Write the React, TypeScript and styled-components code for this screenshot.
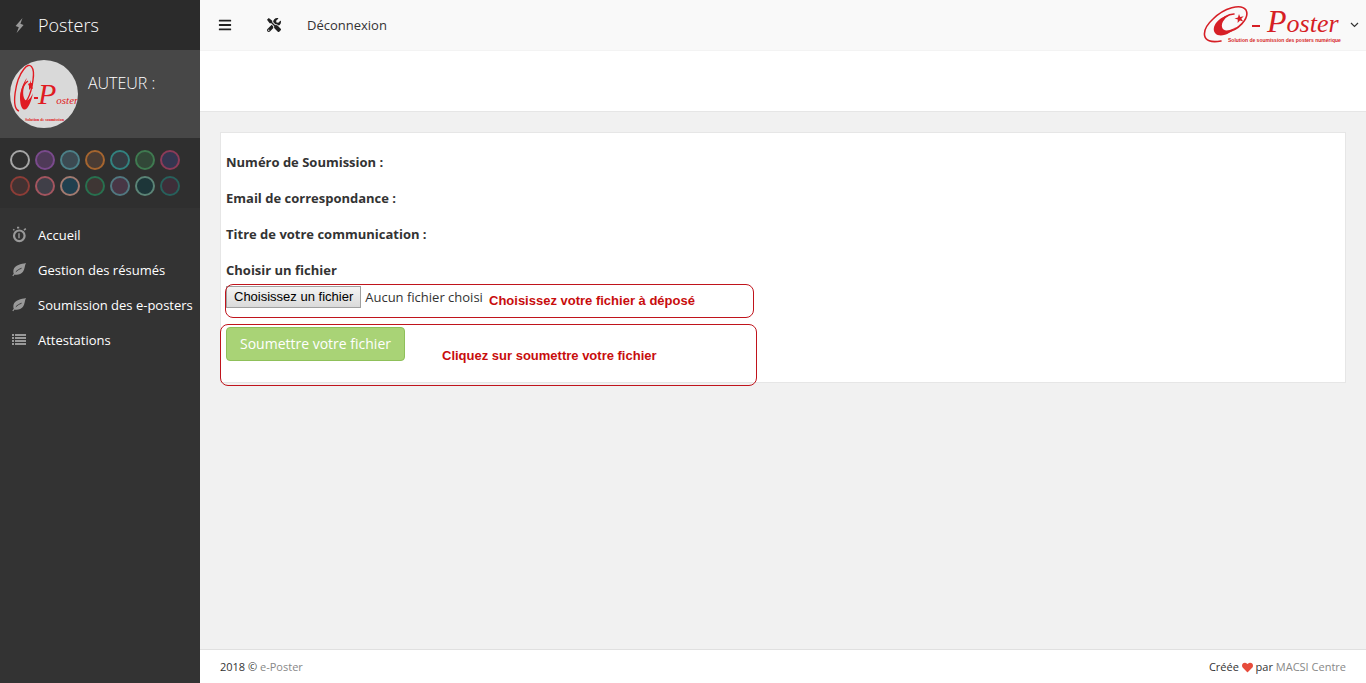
import React, { useRef, useState } from 'react';
import styled, { createGlobalStyle } from 'styled-components';
import { FaBars, FaHeart, FaTools } from 'react-icons/fa';

const GlobalStyle = createGlobalStyle`
  *, *::before, *::after { box-sizing: border-box; }
  body {
    margin: 0;
    background: #333;
    color: #333;
    font-family: "Open Sans", "Noto Sans", sans-serif;
    font-size: 13px;
    line-height: 18px;
  }
  a { color: inherit; text-decoration: none; }
  button { font: inherit; cursor: pointer; }
`;

const Page = styled.div`
  display: flex;
  min-height: 100vh;
`;

const Sidebar = styled.aside`
  flex: 0 0 200px;
  background: #333;
  color: #fff;
`;

const Brand = styled.a`
  display: flex;
  align-items: center;
  gap: 11px;
  height: 50px;
  padding: 0 12px;
  background: #2b2b2b;
  font-size: 18px;
  font-weight: 300;
  svg { color: #999; }
`;

const Profile = styled.section`
  display: flex;
  gap: 10px;
  height: 88px;
  padding: 10px;
  background: #474747;
`;

const Avatar = styled.svg`
  width: 68px;
  height: 68px;
  border-radius: 50%;
  background: #d9d9d9;
`;

const ProfileName = styled.h2`
  margin: 12px 0 0;
  font-size: 16px;
  line-height: 22px;
  font-weight: 300;
`;

const Swatches = styled.div`
  display: grid;
  grid-template-columns: repeat(7, 20px);
  gap: 6px 5px;
  height: 70px;
  padding: 12px 10px;
  background: #2f2f2f;
  align-content: start;
`;

const Swatch = styled.button<{ $ring: string; $fill: string }>`
  width: 20px;
  height: 20px;
  padding: 0;
  border: 2px solid ${(p) => p.$ring};
  border-radius: 50%;
  background: ${(p) => p.$fill};
`;

const Menu = styled.nav`
  display: flex;
  flex-direction: column;
  padding-top: 9px;
`;

const MenuLink = styled.a`
  display: flex;
  align-items: center;
  gap: 11px;
  height: 35px;
  padding-left: 12px;
  white-space: nowrap;
  svg { color: #999; flex: none; }
`;

const Main = styled.div`
  display: flex;
  flex: 1;
  flex-direction: column;
  min-width: 0;
  background: #f1f1f1;
`;

const TopBar = styled.header`
  display: flex;
  align-items: center;
  height: 51px;
  padding: 0 7px 0 18px;
  background: #f9f9f9;
  border-bottom: 1px solid #f3f3f3;
`;

const IconButton = styled.button`
  display: flex;
  width: 14px;
  margin-right: 35px;
  padding: 0;
  border: 0;
  background: none;
  color: #222;
`;

const LogoutLink = styled.a`
  margin-left: -9px;
`;

const AccountButton = styled.button`
  display: flex;
  align-items: center;
  gap: 5px;
  margin-left: auto;
  padding: 0;
  border: 0;
  background: none;
  color: #333;
`;

const TitleBar = styled.div`
  height: 61px;
  background: #fff;
  border-bottom: 1px solid #e6e6e6;
`;

const Content = styled.main`
  flex: 1;
  padding: 20px;
`;

const Panel = styled.form`
  display: flex;
  flex-direction: column;
  align-items: flex-start;
  padding: 20px 5px 21px;
  background: #fff;
  border: 1px solid #e6e6e6;
`;

const Field = styled.p`
  margin: 0 0 18px;
  font-weight: 700;
`;

const FileLabel = styled.label`
  margin-bottom: 7px;
  font-weight: 700;
`;

const Step = styled.div`
  position: relative;
  display: flex;
  align-items: center;
  gap: 4px;
  & + & { margin-top: 19px; }
`;

const StepOutline = styled.div<{ $inset: string; $width: number; $height: number }>`
  position: absolute;
  inset: ${(p) => p.$inset};
  width: ${(p) => p.$width}px;
  height: ${(p) => p.$height}px;
  border: 1px solid #c0141c;
  border-radius: 8px;
  pointer-events: none;
`;

const StepNote = styled.strong<{ $left: number; $top: number }>`
  position: absolute;
  left: ${(p) => p.$left}px;
  top: ${(p) => p.$top}px;
  color: #c80d0d;
  font-family: "Liberation Sans", Arial, sans-serif;
  white-space: nowrap;
`;

const FileButton = styled.button`
  height: 22px;
  padding: 0 7px;
  border: 1px solid #a0a0a0;
  border-radius: 0;
  background: linear-gradient(#f4f4f4, #dadada);
  color: #000;
  font-family: "Liberation Sans", Arial, sans-serif;
  line-height: 20px;
`;

const SubmitButton = styled.button`
  height: 34px;
  padding: 0 13px;
  border: 1px solid #8fc05a;
  border-radius: 4px;
  background: #a9d376;
  color: #fff;
  font-size: 14px;
  line-height: 20px;
`;

const Footer = styled.footer`
  display: flex;
  justify-content: space-between;
  height: 34px;
  padding: 8px 20px;
  background: #fff;
  border-top: 1px solid #e0e0e0;
  font-size: 11px;
  a { color: #888; }
  svg { color: #e74c3c; vertical-align: -2px; }
`;

const swatches = [
  ['#a6a6a6', '#2f2f2f'], ['#7a4a8c', '#4f3a58'], ['#4c8088', '#3c4a52'], ['#a5652f', '#4a3c34'],
  ['#32827f', '#353b41'], ['#3f7a50', '#324838'], ['#8c3b58', '#343650'],
  ['#8d3d37', '#423232'], ['#a3555f', '#403f48'], ['#a27a70', '#20404f'], ['#28714f', '#3e3634'],
  ['#517880', '#483645'], ['#5b8476', '#1d3639'], ['#27615c', '#3e2e39'],
];

const BoltIcon = () => (
  <svg width="15" height="16" viewBox="0 0 15 16" fill="currentColor" aria-hidden="true">
    <path d="M10.5 1L3.6 9l3.2 1.2L4.6 16 11.6 8 8.4 6.8z" />
  </svg>
);

const StopwatchIcon = () => (
  <svg width="15" height="17" viewBox="0 0 15 17" fill="none" stroke="currentColor" aria-hidden="true">
    <circle cx="7.3" cy="9.8" r="5.3" strokeWidth="2.2" />
    <path d="M7 7.2v5" strokeWidth="1.4" />
    <path d="M5 1.6h2.2M12 4.2l1.8-1.6M1.3 4.2l1-1" strokeWidth="1.6" />
  </svg>
);

const LeafIcon = () => (
  <svg width="15" height="15" viewBox="0 0 15 15" aria-hidden="true">
    <path d="M14 1C9 2 3 3 1.6 7.4C1 9.6 1.5 11.3 2.2 12.4C5 13.2 9 12.6 11 9.8C12.8 7.2 12.6 3.6 14 1Z" fill="currentColor" />
    <path d="M0.8 14C1.6 12.8 2.2 12 3 11" fill="none" stroke="currentColor" strokeWidth="1.2" />
    <path d="M3.8 9.8C5.4 8.2 7 7.2 9.6 6.2" fill="none" stroke="#333" strokeWidth="0.9" />
  </svg>
);

const ListIcon = () => (
  <svg width="15" height="13" viewBox="0 0 15 13" fill="currentColor" aria-hidden="true">
    {[1, 4, 7, 10].map((y) => (
      <path key={y} d={`M0 ${y}h2v2h-2zM3 ${y}h11v2h-11z`} />
    ))}
  </svg>
);

const Logo = () => (
  <svg width="142" height="40" viewBox="0 0 142 40" role="img" aria-label="e-Poster">
    <g fill="none" stroke="#d61f26" strokeLinecap="round">
      <path d="M18 36C-3 40-2 25 10 14C21 3 38-2 43 5C47 13 35 26 23 27C12 27 13 18 22 12C25 10 28 9 31 9" strokeWidth="1.6" />
    </g>
    <path d="M27 10C15 12 8 22 12 28C17 34 29 28 33 22C27 26 20 27 19 22C18 17 23 12 27 10Z" fill="#d61f26" />
    <path d="M36 9l1.2 3 3.5-.8-2.4 2.6 2 2.7-3.3-1-2.4 2.5.2-3.4-3.3-1.2 3.4-1z" fill="#d61f26" />
    <path d="M49 21h8" stroke="#d61f26" strokeWidth="2" />
    <text x="64" y="27" fill="#d61f26" fontFamily="Liberation Serif, serif" fontStyle="italic">
      <tspan fontSize="32">P</tspan>
      <tspan fontSize="26">oster</tspan>
    </text>
    <text x="25" y="37" fill="#d61f26" fontFamily="Liberation Sans, sans-serif" fontWeight="700" fontSize="5">
      Solution de soumission des posters numérique
    </text>
  </svg>
);

const AvatarLogo = () => (
  <Avatar viewBox="0 0 68 68" role="img" aria-label="e-Poster">
    <path
      d="M9 51C1 48 5 20 14 9C20 1 25 7 23 20C21 36 15 46 12 42C9 37 12 25 18 21"
      fill="none"
      stroke="#e01b22"
      strokeWidth="1.4"
    />
    <path d="M17 18C10 26 8 44 13 49C17 52 21 43 23 33C20 40 16 43 14 38C12 32 14 25 17 18Z" fill="#e01b22" />
    <path d="M20 20l1 3 2 0-1 3 1 3-2-1-2 2 0-4-1-2 2-1z" fill="#e01b22" />
    <path d="M24 38h4" stroke="#e01b22" strokeWidth="2" />
    <text x="28" y="44" fill="#e01b22" fontFamily="Liberation Serif, serif" fontStyle="italic">
      <tspan fontSize="30">P</tspan><tspan fontSize="11">oster</tspan>
    </text>
    <text x="15" y="61" fill="#e01b22" fontFamily="Liberation Serif, serif" fontWeight="700" fontSize="4">
      Solution de soumission
    </text>
  </Avatar>
);

export default function App() {
  const fileInput = useRef<HTMLInputElement>(null);
  const [fileName, setFileName] = useState('Aucun fichier choisi');

  return (
    <>
      <GlobalStyle />
      <Page>
        <Sidebar>
          <Brand href="#"><BoltIcon />Posters</Brand>
          <Profile>
            <AvatarLogo />
            <ProfileName>AUTEUR :</ProfileName>
          </Profile>
          <Swatches>
            {swatches.map(([ring, fill], i) => (
              <Swatch key={ring} type="button" $ring={ring} $fill={fill} aria-label={`Thème ${i + 1}`} />
            ))}
          </Swatches>
          <Menu>
            <MenuLink href="#"><StopwatchIcon />Accueil</MenuLink>
            <MenuLink href="#"><LeafIcon />Gestion des résumés</MenuLink>
            <MenuLink href="#"><LeafIcon />Soumission des e-posters</MenuLink>
            <MenuLink href="#"><ListIcon />Attestations</MenuLink>
          </Menu>
        </Sidebar>
        <Main>
          <TopBar>
            <IconButton type="button" aria-label="Menu"><FaBars size={14} /></IconButton>
            <IconButton type="button" aria-label="Outils"><FaTools size={14} /></IconButton>
            <LogoutLink href="#">Déconnexion</LogoutLink>
            <AccountButton type="button" aria-label="Compte">
              <Logo />
              <svg width="9" height="6" viewBox="0 0 9 6" fill="none" stroke="currentColor" aria-hidden="true">
                <path d="M1 1l3.5 3.5L8 1" strokeWidth="1.2" />
              </svg>
            </AccountButton>
          </TopBar>
          <TitleBar />
          <Content>
            <Panel onSubmit={(e) => e.preventDefault()}>
              <Field>Numéro de Soumission :</Field>
              <Field>Email de correspondance :</Field>
              <Field>Titre de votre communication :</Field>
              <FileLabel htmlFor="fichier">Choisir un fichier</FileLabel>
              <Step>
                <input
                  id="fichier"
                  type="file"
                  hidden
                  ref={fileInput}
                  onChange={(e) => setFileName(e.target.files?.[0]?.name ?? 'Aucun fichier choisi')}
                />
                <FileButton type="button" onClick={() => fileInput.current?.click()}>
                  Choisissez un fichier
                </FileButton>
                <span>{fileName}</span>
                <StepOutline $inset="-2px auto auto -1px" $width={529} $height={34} />
                <StepNote $left={263} $top={6}>Choisissez votre fichier à déposé</StepNote>
              </Step>
              <Step>
                <SubmitButton type="submit">Soumettre votre fichier</SubmitButton>
                <StepOutline $inset="-3px auto auto -6px" $width={537} $height={62} />
                <StepNote $left={216} $top={20}>Cliquez sur soumettre votre fichier</StepNote>
              </Step>
            </Panel>
          </Content>
          <Footer>
            <span>2018 © <a href="#">e-Poster</a></span>
            <span>Créée <FaHeart size={11} /> par <a href="#">MACSI Centre</a></span>
          </Footer>
        </Main>
      </Page>
    </>
  );
}
